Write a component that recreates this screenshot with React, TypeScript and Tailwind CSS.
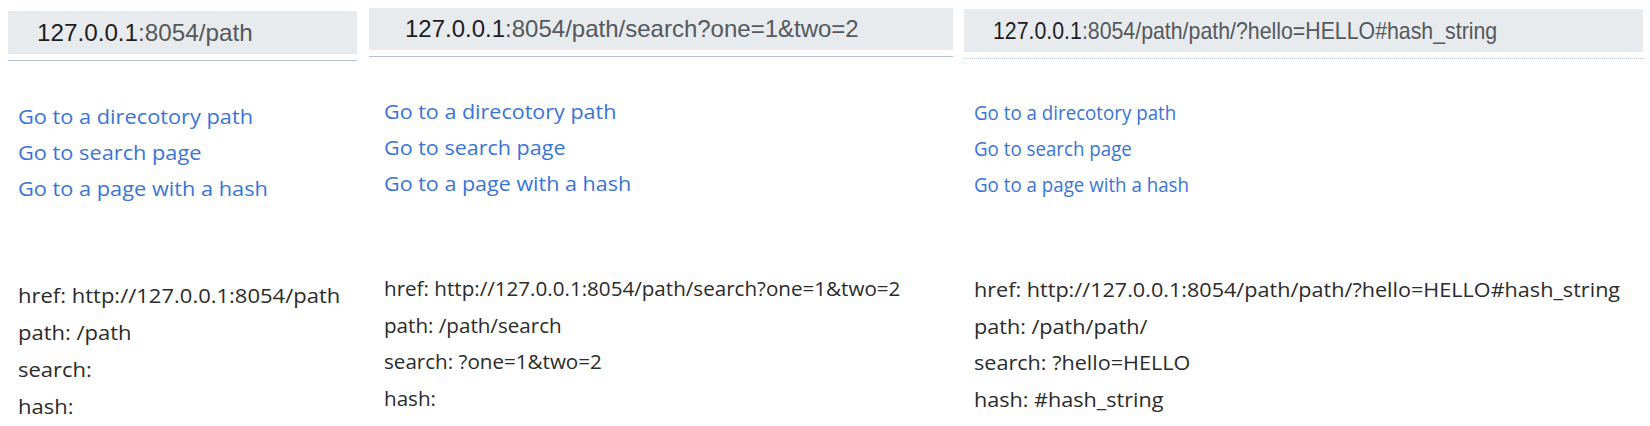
import React from 'react';

// three browser captures of the same Dash location demo, side by side
const LINKS = ['Go to a direcotory path', 'Go to search page', 'Go to a page with a hash'];

const sans = { fontFamily: '"Open Sans", "Noto Sans", sans-serif' };

const UrlText = ({ host, rest, squeeze }: { host: string; rest: string; squeeze: string }) => (
  <div
    className={`origin-left whitespace-nowrap text-[24px] leading-none ${squeeze}`}
    style={{ fontFamily: '"Liberation Sans", Arial, sans-serif' }}
  >
    <span className="text-[#1d1d1f]">{host}</span>
    <span className="text-[#55585c]">{rest}</span>
  </div>
);

const App = () => {
  return (
    <div className="flex h-[426px] w-[1650px] overflow-hidden bg-white">
      {/* panel one */}
      <section className="w-[362px] shrink-0">
        <div className="ml-[8px] mt-[11px] flex h-[43px] w-[349px] items-center bg-[#e8ebee] pl-[29px]">
          <UrlText host="127.0.0.1" rest=":8054/path" squeeze="scale-x-[1.01]" />
        </div>
        <div className="ml-[8px] mt-[6px] h-px w-[349px] bg-[#b7c1d8]" />
        <div
          className="ml-[18px] mt-[38px] origin-left scale-x-[1.088] text-[20px] leading-[36px] text-[#3a74d9]"
          style={sans}
        >
          {LINKS.map((l) => (
            <div key={l} className="whitespace-nowrap">{l}</div>
          ))}
        </div>
        <div
          className="ml-[18px] mt-[70px] origin-left scale-x-[1.1] text-[20px] leading-[37px] text-[#2b2b2b]"
          style={sans}
        >
          <div className="whitespace-nowrap">href: http://127.0.0.1:8054/path</div>
          <div className="whitespace-nowrap">path: /path</div>
          <div className="whitespace-nowrap">search:</div>
          <div className="whitespace-nowrap">hash:</div>
        </div>
      </section>

      {/* panel two */}
      <section className="w-[596px] shrink-0">
        <div className="ml-[7px] mt-[8px] flex h-[42px] w-[584px] items-center bg-[#e8ebee] pl-[36px]">
          <UrlText host="127.0.0.1" rest=":8054/path/search?one=1&two=2" squeeze="scale-x-[1]" />
        </div>
        <div className="ml-[7px] mt-[6px] h-px w-[584px] bg-[#b7c1d8]" />
        <div
          className="ml-[22px] mt-[37px] origin-left scale-x-[1.076] text-[20px] leading-[36px] text-[#3a74d9]"
          style={sans}
        >
          {LINKS.map((l) => (
            <div key={l} className="whitespace-nowrap">{l}</div>
          ))}
        </div>
        <div
          className="ml-[22px] mt-[69px] origin-left scale-x-[1.03] text-[20px] leading-[36.5px] text-[#2b2b2b]"
          style={sans}
        >
          <div className="whitespace-nowrap">href: http://127.0.0.1:8054/path/search?one=1&amp;two=2</div>
          <div className="whitespace-nowrap">path: /path/search</div>
          <div className="whitespace-nowrap">search: ?one=1&amp;two=2</div>
          <div className="whitespace-nowrap">hash:</div>
        </div>
      </section>

      {/* panel three */}
      <section className="flex-1">
        <div className="ml-[6px] mt-[9px] flex h-[43px] w-[679px] items-center bg-[#e8ebee] pl-[29px]">
          <UrlText host="127.0.0.1" rest=":8054/path/path/?hello=HELLO#hash_string" squeeze="scale-x-[0.888]" />
        </div>
        <div className="ml-[6px] mt-[6px] w-[679px] border-t border-dotted border-[#b7c1d8]" />
        <div
          className="ml-[16px] mt-[36px] origin-left scale-x-[0.936] text-[20px] leading-[36px] text-[#3a74d9]"
          style={sans}
        >
          {LINKS.map((l) => (
            <div key={l} className="whitespace-nowrap">{l}</div>
          ))}
        </div>
        <div
          className="ml-[16px] mt-[69px] origin-left scale-x-[1.08] text-[20px] leading-[36.5px] text-[#2b2b2b]"
          style={sans}
        >
          <div className="whitespace-nowrap">href: http://127.0.0.1:8054/path/path/?hello=HELLO#hash_string</div>
          <div className="whitespace-nowrap">path: /path/path/</div>
          <div className="whitespace-nowrap">search: ?hello=HELLO</div>
          <div className="whitespace-nowrap">hash: #hash_string</div>
        </div>
      </section>
    </div>
  );
};

export default App;
